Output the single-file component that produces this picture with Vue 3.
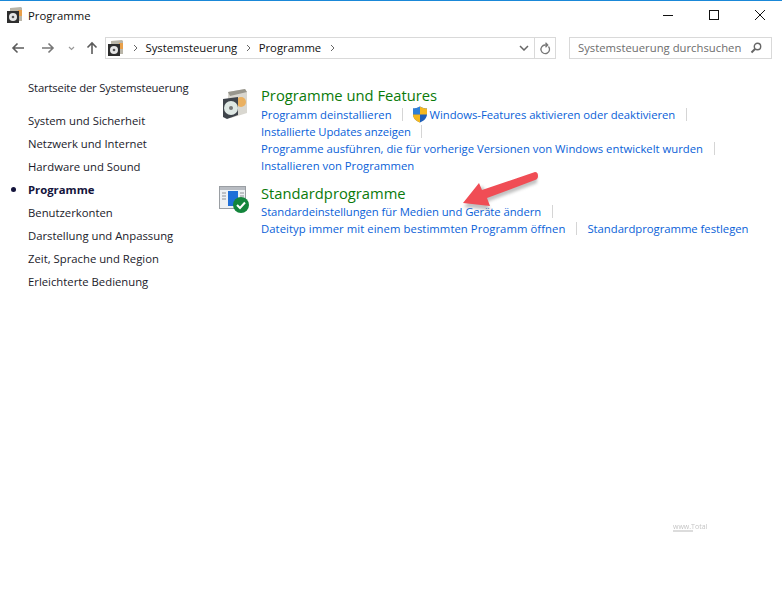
<script setup>
const navItems = [
  { label: 'System und Sicherheit' },
  { label: 'Netzwerk und Internet' },
  { label: 'Hardware und Sound' },
  { label: 'Programme', active: true },
  { label: 'Benutzerkonten' },
  { label: 'Darstellung und Anpassung' },
  { label: 'Zeit, Sprache und Region' },
  { label: 'Erleichterte Bedienung' }
]
</script>

<template>
  <div class="window">
    <header class="titlebar">
      <svg class="cp-icon" viewBox="0 0 16 16" width="16" height="16">
        <path d="M3 1l11-1 1 1v13H3z" fill="#b9b5a8" />
        <path d="M11 3h4v6h-4z" fill="#e8a04a" />
        <path d="M0 4h12v12H0z" fill="#2e2e2e" />
        <circle cx="6" cy="10" r="4" fill="#e6e6e6" />
        <circle cx="6" cy="10" r="1.300" fill="#555" />
      </svg>
      <span class="title">Programme</span>
      <div class="controls">
        <svg viewBox="0 0 10 10" width="10" height="10"><path d="M0 5.500h10" stroke="#111" fill="none" /></svg>
        <svg viewBox="0 0 10 10" width="10" height="10"><rect x=".5" y=".5" width="9" height="9" stroke="#111" fill="none" /></svg>
        <svg viewBox="0 0 10 10" width="10" height="10"><path d="M0 0l10 10M10 0L0 10" stroke="#111" fill="none" /></svg>
      </div>
    </header>

    <div class="toolbar">
      <svg viewBox="0 0 14 12" width="14" height="12"><path d="M13 6H2M6.500 1.500L2 6l4.500 4.500" stroke="#5c5c5c" stroke-width="1.600" fill="none" /></svg>
      <svg class="fwd" viewBox="0 0 14 12" width="14" height="12"><path d="M1 6h11M7.500 1.500L12 6l-4.500 4.500" stroke="#777" stroke-width="1.600" fill="none" /></svg>
      <svg class="drop" viewBox="0 0 7 5" width="7" height="5"><path d="M1 1l2.500 2.500L6 1" stroke="#999" stroke-width="1.200" fill="none" /></svg>
      <svg class="up" viewBox="0 0 12 14" width="12" height="14"><path d="M6 13V2M1.500 6.500L6 2l4.500 4.500" stroke="#5c5c5c" stroke-width="1.600" fill="none" /></svg>
      <div class="address">
        <svg class="addr-icon" viewBox="0 0 16 16" width="16" height="16">
          <path d="M3 1l11-1 1 1v13H3z" fill="#b9b5a8" />
          <path d="M11 3h4v6h-4z" fill="#e8a04a" />
          <path d="M0 4h12v12H0z" fill="#2e2e2e" />
          <circle cx="6" cy="10" r="4" fill="#e6e6e6" />
          <circle cx="6" cy="10" r="1.300" fill="#555" />
        </svg>
        <svg class="crumb" viewBox="0 0 5 8" width="5" height="8"><path d="M1 1l3 3-3 3" stroke="#666" fill="none" /></svg>
        <span class="crumb-text">Systemsteuerung</span>
        <svg class="crumb" viewBox="0 0 5 8" width="5" height="8"><path d="M1 1l3 3-3 3" stroke="#666" fill="none" /></svg>
        <span class="crumb-text">Programme</span>
        <svg class="crumb" viewBox="0 0 5 8" width="5" height="8"><path d="M1 1l3 3-3 3" stroke="#666" fill="none" /></svg>
        <svg class="addr-chevron" viewBox="0 0 10 6" width="10" height="6"><path d="M1 1l4 4 4-4" stroke="#666" stroke-width="1.500" fill="none" /></svg>
        <div class="refresh">
          <svg viewBox="0 0 12 13" width="12" height="13"><path d="M9.500 4.500A4.300 4.300 0 1 1 6 3H8M6.500 .8L8.700 3 6.500 5.200" stroke="#777" stroke-width="1.300" fill="none" /></svg>
        </div>
      </div>
      <div class="search">
        <span>Systemsteuerung durchsuchen</span>
        <svg viewBox="0 0 12 12" width="12" height="12"><circle cx="7.500" cy="4.500" r="3.200" stroke="#666" stroke-width="1.400" fill="none" /><path d="M5 7l-3.500 3.500" stroke="#666" stroke-width="2" fill="none" /></svg>
      </div>
    </div>

    <div class="body">
      <aside class="sidebar">
        <a class="home">Startseite der Systemsteuerung</a>
        <nav class="nav">
          <a v-for="item in navItems" :key="item.label" :class="{ active: item.active }">{{ item.label }}</a>
        </nav>
      </aside>

      <main class="main">
        <section class="group first">
          <svg class="group-icon" viewBox="0 0 24 30" width="24" height="30">
            <path d="M5 3L22 0l2 3v21L8 29l-3-2z" fill="#d9d7d0" />
            <path d="M5 3L22 0l2 3L7 7z" fill="#98968d" />
            <circle cx="18" cy="13" r="5" fill="#eab060" />
            <path d="M0 10l15-2v18L4 30l-4-2z" fill="#3f444b" />
            <circle cx="8" cy="19" r="7" fill="#dfe8e4" />
            <circle cx="8" cy="19" r="2" fill="#777" />
          </svg>
          <div class="group-body">
            <h2>Programme und Features</h2>
            <div class="row tall">
              <a>Programm deinstallieren</a><i class="sep"></i>
              <svg class="shield" viewBox="0 0 16 17" width="16" height="17">
                <path d="M8 .5C5.500 2 3.500 2.500 1 2.500V8c0 4 3 7 7 8.500 4-1.500 7-4.500 7-8.500V2.500C12.500 2.500 10.500 2 8 .5z" fill="#1f5fb8" />
                <path d="M8 .5V8.500H1V2.500C3.500 2.500 5.500 2 8 .5z" fill="#2f7fd8" />
                <path d="M8 .5C10.500 2 12.500 2.500 15 2.500V8.500H8z" fill="#f6b81e" />
                <path d="M1 8.500H8V16.500C4 15 1 12.500 1 8.500z" fill="#f6b81e" />
              </svg>
              <a class="feat">Windows-Features aktivieren oder deaktivieren</a><i class="sep"></i>
            </div>
            <div class="row"><a class="upd">Installierte Updates anzeigen</a><i class="sep"></i></div>
            <div class="row"><a>Programme ausführen, die für vorherige Versionen von Windows entwickelt wurden</a><i class="sep"></i></div>
            <div class="row"><a>Installieren von Programmen</a></div>
          </div>
        </section>

        <section class="group second">
          <svg class="group-icon" viewBox="0 0 30 28" width="30" height="28">
            <rect x=".5" y="1.500" width="26" height="22" fill="#eef1f4" stroke="#9a9ea3" />
            <rect x="1" y="2" width="25" height="3" fill="#b8bcc2" />
            <rect x="9" y="6" width="10" height="15" fill="#1f6fd8" />
            <path d="M3 8h4M3 11h4M3 14h4M21 8h4M21 11h4" stroke="#8c9096" />
            <circle cx="22" cy="20" r="8" fill="#13853c" />
            <path d="M18 20l3 3 5-5.500" stroke="#fff" stroke-width="2" fill="none" />
          </svg>
          <div class="group-body">
            <h2>Standardprogramme</h2>
            <div class="row"><a class="media">Standardeinstellungen für Medien und Geräte ändern</a><i class="sep"></i></div>
            <div class="row"><a class="datei">Dateityp immer mit einem bestimmten Programm öffnen</a><i class="sep"></i><a class="fest">Standardprogramme festlegen</a></div>
          </div>
        </section>
      </main>
    </div>

    <svg class="arrow" viewBox="0 0 84 44" width="84" height="44">
      <defs><filter id="s" x="-20%" y="-20%" width="140%" height="140%"><feGaussianBlur stdDeviation="1.500" /></filter></defs>
      <path d="M76 5L25 22l-4-6L3 37l26 3-3-8 50-19z" fill="#777" opacity=".45" filter="url(#s)" transform="translate(1 2)" />
      <path d="M75 4Q78 4 78 8Q78 11 75 12L27 30l3 8-27-3 16-20 3 7z" fill="#f04d55" />
    </svg>
    <div class="watermark">
      <span class="wm-text">www.Total</span>
      <span class="wm-line"></span>
    </div>
  </div>
</template>

<style>
html, body { margin: 0; background: #fff; }
</style>

<style scoped>
.window {
  position: relative;
  width: 782px;
  height: 591px;
  overflow: hidden;
  background: #fff;
  border-top: 1px solid #1a88d8;
  box-sizing: border-box;
  font-family: "Open Sans", "Noto Sans", sans-serif;
  font-size: 11.3px;
  color: #1a1a1a;
}
.titlebar {
  display: flex;
  align-items: center;
  height: 28px;
  padding-left: 7px;
}
.title { margin-left: 5px; font-size: 11.300px; color: #111; }
.controls {
  margin-left: auto;
  display: flex;
  gap: 36px;
  padding-right: 17px;
}
.toolbar {
  display: flex;
  align-items: center;
  height: 24px;
  margin-top: 7px;
  padding-left: 11px;
}
.fwd { margin-left: 16px; }
.drop { margin-left: 13px; }
.up { margin-left: 11px; }
.address {
  display: flex;
  align-items: center;
  width: 451px;
  height: 22px;
  margin-left: 7px;
  border: 1px solid #d9d9d9;
  box-sizing: border-box;
}
.addr-icon { margin-left: 2px; }
.crumb { margin: 0 7.500px 0 9px; }
.crumb-text { font-size: 11.300px; color: #111; padding-bottom: 2px; }
.addr-chevron { margin-left: auto; margin-right: 5px; }
.refresh {
  width: 20px;
  height: 20px;
  display: flex;
  align-items: center;
  justify-content: center;
  border-left: 1px solid #d9d9d9;
}
.search {
  display: flex;
  align-items: center;
  justify-content: space-between;
  width: 203px;
  height: 22px;
  margin-left: 13px;
  padding: 0 9px 0 8px;
  border: 1px solid #d9d9d9;
  box-sizing: border-box;
  color: #6d6d6d;
  font-size: 11.300px;
}
.search span { padding-bottom: 2px; }
.body { display: flex; }
.sidebar { width: 220px; padding: 20px 0 0 28px; box-sizing: border-box; }
.home { display: block; line-height: 16px; color: #1a1a2a; white-space: nowrap; letter-spacing: -.17px; }
.nav { display: flex; flex-direction: column; margin-top: 13px; }
.nav a { line-height: 23px; color: #1a1a2a; white-space: nowrap; }
.nav a.active { position: relative; font-weight: 700; color: #14143c; }
.nav a.active::before {
  content: "";
  position: absolute;
  left: -17px;
  top: 9px;
  width: 5px;
  height: 5px;
  border-radius: 50%;
  background: #14143c;
}
.main { flex: 1; min-width: 0; }
.group { display: flex; }
.group.first { padding-top: 25px; }
.group.second { padding-top: 9px; }
.group-icon { flex: none; }
.first .group-icon { margin: 4px 14px 0 3px; }
.second .group-icon { margin: 2px 12px 0 -1px; }
.group-body { min-width: 0; }
h2 {
  margin: 0;
  font-size: 14.750px;
  font-weight: 400;
  line-height: 20px;
  color: #0a7a0a;
  white-space: nowrap;
}
.row { display: flex; align-items: center; height: 17px; white-space: nowrap; }
.row.tall { height: 18px; }
.row a { color: #0a5fd8; }
.row a.feat { letter-spacing: -.05px; }
.row a.upd { letter-spacing: -.1px; }
.row a.media { letter-spacing: -.06px; }
.row a.datei { letter-spacing: .06px; }
.row a.fest { letter-spacing: -.03px; }
.sep { width: 1px; height: 13px; margin: 0 10.500px; background: #d5d5d5; flex: none; }
.shield { margin-left: -2px; margin-right: 2px; flex: none; }
.arrow { position: absolute; left: 460px; top: 167px; }
.watermark {
  position: absolute;
  left: 673px;
  top: 522px;
  display: flex;
  flex-direction: column;
  opacity: .5;
}
.wm-text { font-size: 7px; line-height: 7px; color: #888; }
.wm-line { width: 20px; height: 2px; background: #bbb; }
</style>
